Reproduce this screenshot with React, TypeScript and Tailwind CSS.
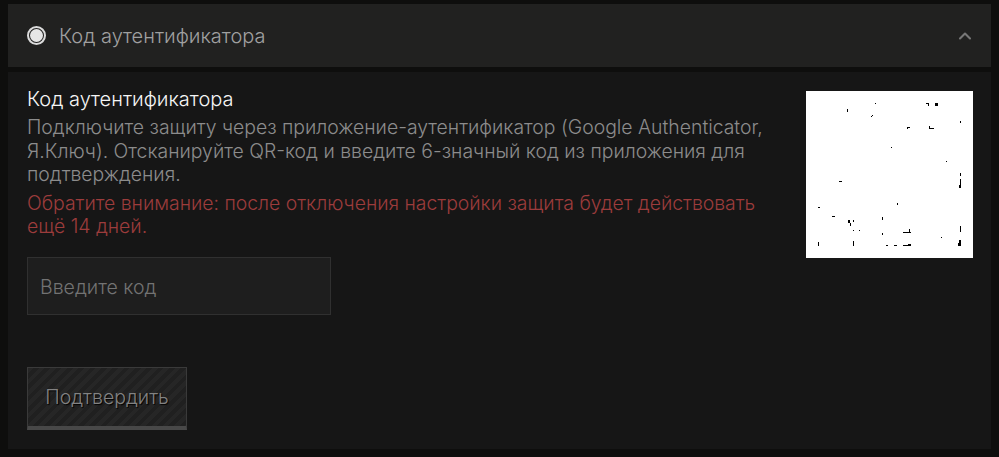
import React from 'react';
import { ChevronUp } from 'lucide-react';

const qrMarks = [
  [875, 103, 1, 1], [926, 103, 3, 1], [928, 104, 1, 2], [935, 103, 3, 3], [847, 109, 1, 3],
  [872, 115, 1, 1], [871, 116, 1, 1], [960, 121, 1, 2], [907, 127, 3, 1], [907, 128, 1, 1],
  [929, 126, 1, 3], [929, 128, 5, 1], [891, 147, 1, 1], [946, 161, 1, 1], [960, 173, 1, 3],
  [960, 179, 1, 6], [959, 185, 2, 3], [839, 181, 3, 1], [818, 207, 2, 1], [897, 203, 1, 2],
  [832, 216, 3, 1], [848, 220, 2, 3], [850, 223, 1, 3], [853, 220, 1, 2], [882, 217, 1, 3],
  [853, 230, 1, 1], [859, 230, 1, 1], [882, 233, 1, 2], [903, 232, 8, 1], [909, 229, 1, 3],
  [960, 226, 1, 6], [941, 237, 1, 1], [818, 242, 1, 4], [853, 241, 1, 5], [886, 245, 2, 1],
  [894, 245, 3, 1], [903, 245, 8, 1], [908, 244, 3, 1], [959, 240, 2, 6], [958, 243, 1, 3],
];

const QrCode = () => (
  <svg width="167" height="167" viewBox="806 91 167 167" className="block shrink-0" shapeRendering="crispEdges">
    <rect x="806" y="91" width="167" height="167" fill="#ffffff" />
    {qrMarks.map(([x, y, w, h], i) => (
      <rect key={i} x={x} y={y} width={w} height={h} fill="#000000" />
    ))}
  </svg>
);

const App = () => {
  return (
    <div className="w-[999px] h-[457px] overflow-hidden bg-[#0e0e0d] px-2 pt-1 font-['Inter',sans-serif] font-light">
      {/* Header */}
      <div className="h-[63px] flex items-center justify-between bg-[#212120] pl-[19px] pr-[16px]">
        <div className="flex items-center gap-[13px]">
          <span className="w-[19px] h-[19px] rounded-full border-2 border-[#dcdcdc] flex items-center justify-center">
            <span className="w-[13px] h-[13px] rounded-full bg-[#e6e6e6]" />
          </span>
          <span className="text-[20px] leading-6 text-[#a0a0a0]">Код аутентификатора</span>
        </div>
        <ChevronUp size={20} strokeWidth={2.5} className="text-[#777777]" />
      </div>

      {/* Body */}
      <div className="mt-[5px] h-[377px] bg-[#161616] pl-[19px] pr-[18px] pt-[15px]">
        <div className="h-[170px] flex justify-between items-start">
          <div className="w-[755px]">
            <h3 className="text-[20px] leading-6 font-light text-[#f5f5f5]">Код аутентификатора</h3>
            <p className="text-[19.4px] leading-[23.6px] text-[#8c8c8c] mt-[5px]">
              Подключите защиту через приложение-аутентификатор (Google Authenticator,
              Я.Ключ). Отсканируйте QR-код и введите 6-значный код из приложения для
              подтверждения.
            </p>
            <p className="text-[19.4px] leading-[23.6px] text-[#9c3c3c] mt-[5px]">
              Обратите внимание: после отключения настройки защита будет действовать
              ещё 14 дней.
            </p>
          </div>
          <div className="mt-[4px]">
            <QrCode />
          </div>
        </div>

        <div className="w-[304px] h-[58px] flex items-center bg-[#1e1e1e] border border-[#303030] pl-3">
          <span className="text-[19.5px] text-[#737373] pt-[4px]">Введите код</span>
        </div>

        <button className="mt-[52px] w-[160px] h-[63px] flex items-center justify-center border border-[#3a3a3a] border-b-4 border-b-[#484848] bg-[repeating-linear-gradient(135deg,#262626_0px,#262626_4px,#202020_4px,#202020_8px)] text-[19.5px] text-[#828282] [text-shadow:1px_1px_1px_#000000]">
          <span className="pt-[2px]">Подтвердить</span>
        </button>
      </div>
    </div>
  );
};

export default App;
